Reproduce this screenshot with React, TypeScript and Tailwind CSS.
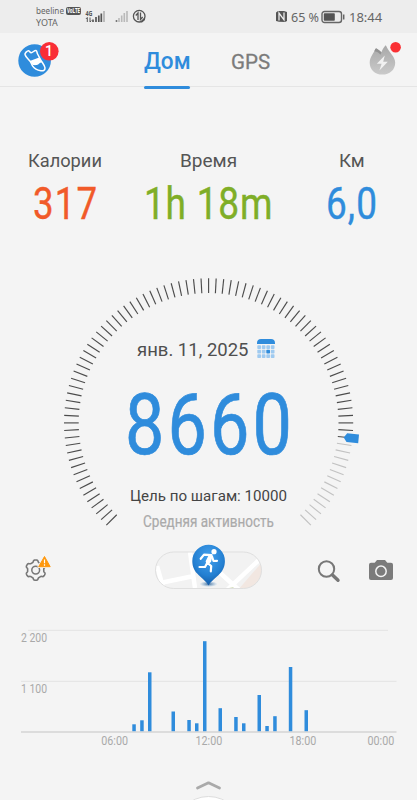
import { useLayoutEffect, useRef, useState, type ReactNode } from "react";

/** Text condensed horizontally so that it fills its container's width. */
function Fit({ className = "", children }: { className?: string; children: ReactNode }) {
  const box = useRef<HTMLDivElement>(null);
  const text = useRef<HTMLSpanElement>(null);
  const [scale, setScale] = useState(1);
  useLayoutEffect(() => {
    if (box.current && text.current) setScale(box.current.offsetWidth / text.current.offsetWidth);
  }, []);
  return (
    <div ref={box} className={`shrink-0 whitespace-nowrap ${className}`}>
      <span ref={text} className="inline-block origin-left" style={{ transform: `scaleX(${scale})` }}>
        {children}
      </span>
    </div>
  );
}

function StatusBar() {
  return (
    <div className="flex h-[33px] shrink-0 items-start bg-[#ededed] font-['Noto_Sans',sans-serif] text-[#666]">
      <div className="ml-[36px] flex flex-col pt-[5px]">
        <div className="flex items-center">
          <Fit className="w-[28px] text-[9px] leading-[12px]">beeline</Fit>
          <div className="ml-[2px] flex h-[8px] w-[15px] justify-center rounded-[2px] bg-[#555]">
            <Fit className="w-[13px] text-[6.5px] leading-[8px] font-bold text-white">VoLTE</Fit>
          </div>
        </div>
        <Fit className="w-[22px] text-[9px] leading-[12px]">YOTA</Fit>
      </div>
      <svg className="ml-[4px]" width="64" height="33" viewBox="85 0 64 33">
        <text x="85.5" y="15.5" fontSize="7.5" fontWeight="700" fill="#555" textLength="7" lengthAdjust="spacingAndGlyphs">4G</text>
        <path d="M87.3 22v-4.5m-1.3 1.4 1.3-1.4M90 17.5V22m1.3-1.4L90 22" stroke="#555" strokeWidth="1" fill="none" />
        <path d="M93 22v-2.5M96 22v-5M98.8 22v-6.5M101.3 22v-8.5" stroke="#555" strokeWidth="1.7" />
        <path d="M104 22V11" stroke="#aaa" strokeWidth="1.5" />
        <path d="M116.5 22v-2" stroke="#777" strokeWidth="1.6" />
        <path d="M119 22v-4M121.7 22v-6.5M124.3 22v-9M127 22V11" stroke="#b9b9b9" strokeWidth="1.6" />
        <circle cx="139.2" cy="16.2" r="5.8" fill="none" stroke="#555" strokeWidth="1.3" />
        <path d="M138 20v-7l-2.2 2.5M140.5 12.5v7l2.2-2.5" stroke="#555" strokeWidth="1.3" fill="none" />
        <path d="m140 22 5-5v3l-3 2.4z" fill="#555" />
      </svg>
      <div className="ml-[126px] flex h-[33px] items-center">
        <svg width="13" height="13" viewBox="0 0 13 13">
          <path d="M3 1h6l3 1v9l-2 1-6-.3L1 11V2.4z" fill="#555" />
          <path d="M4 10.5V3l5 6.800V2.500" fill="none" stroke="#ededed" strokeWidth="1.3" />
        </svg>
        <Fit className="ml-[3px] w-[28px] text-[13px] leading-[18px]">65 %</Fit>
        <svg className="ml-[2px]" width="24" height="14" viewBox="0 0 24 14">
          <rect x="1" y="1.5" width="19.5" height="11" rx="2.5" fill="none" stroke="#666" strokeWidth="1.4" />
          <rect x="2.8" y="3.3" width="11" height="7.4" rx=".8" fill="#555" />
          <path d="M22.7 4.5v5" stroke="#666" strokeWidth="1.5" />
        </svg>
        <Fit className="ml-[4px] w-[33px] text-[13px] leading-[18px]">18:44</Fit>
      </div>
    </div>
  );
}

function Header() {
  return (
    <div className="flex h-[56px] shrink-0">
      <div className="flex h-[54px] w-full border-b border-[#e5e5e5]">
        <svg className="ml-[17px] shrink-0" width="44" height="46" viewBox="17 33 44 46">
          <circle cx="34.6" cy="60.5" r="16.3" fill="#2f8cdc" />
          <path d="M25 54.5c-.4-1.1 2.3-4 3.6-3.8 1.2.3 1.3 2.1 2.6 2 1.8-.1 3-2.5 4.8-2.3 1.2.2.7 2 1.6 3.6 1.1 2.1 2 4 3.5 6.6 1.4 2.4 3.7 4.9 3.9 7.2.2 2.4-1.6 3.3-4.1 2.9-3.1-.5-6.6-2.2-8.2-4.6-1.3-2-1.500-3.700-3.200-5.600-1.700-2-4-3.800-4.500-6z" fill="#2f8cdc" stroke="white" strokeWidth="1.5" strokeLinejoin="round" />
          <path d="m29.7 61 9.500-3.500 2.500 5c-2.200.1-2.700 2-5 2.500-1.400.3-2.700.1-4 0-.6-1.500-1.700-2.700-3-4z" fill="white" />
          <circle cx="49.3" cy="51.3" r="9.3" fill="#f92e36" />
          <text x="49" y="56.3" textAnchor="middle" fontSize="14" fontWeight="500" fill="white">1</text>
        </svg>
        <div className="ml-[82px] flex h-[56px] w-[48px] flex-col justify-between">
          <Fit className="mt-[16px] ml-[0.5px] w-[47px] text-[23px] leading-[25px] font-medium text-[#2f8cdc]">Дом</Fit>
          <div className="ml-[1px] h-[3.5px] w-[46px] rounded-full bg-[#2f8cdc]" />
        </div>
        <Fit className="mt-[16px] ml-[40px] w-[39px] text-[20.5px] leading-[26px] text-[#7b7b7b] [-webkit-text-stroke:0.3px_#7b7b7b]">GPS</Fit>
        <svg className="ml-[97px] shrink-0" width="36" height="46" viewBox="367 33 36 46">
          <defs>
            <linearGradient id="flame" x1="0" x2="0" y1="0" y2="1">
              <stop stopColor="#a8a8a8" />
              <stop offset="1" stopColor="#cacaca" />
            </linearGradient>
          </defs>
          <path d="M375.3 49c-1.600 4.500-5.600 8-5.600 13.700 0 7 5.200 11.900 12.600 11.900s12.900-4.800 12.900-11.900c0-6.200-5.800-9.500-9-16.700-.3-.6-.8-.6-1.200-.1-1.600 2-2.900 4.200-3.600 6.400-1.600-1.300-3-2.500-4.800-3.700-.6-.4-1.100-.2-1.300.4z" fill="url(#flame)" />
          <path d="M375.300 49c.2-.6.700-.8 1.300-.4 1.800 1.200 3.200 2.400 4.800 3.700l-1 2.500c-1-2-3-3.300-6.100-3.600z" fill="#929292" />
          <path d="m384.800 55.400-8 8.400h4.800l-2.200 6.600 8.400-8.600h-4.600z" fill="#f1f1f1" />
          <circle cx="395.6" cy="47.3" r="5.3" fill="#fa3034" />
        </svg>
      </div>
    </div>
  );
}

function Stats() {
  return (
    <div className="mt-[60px] flex h-[80px] shrink-0 text-[#555]">
      <div className="ml-[27px] flex w-[76px] flex-col items-center gap-[6px]">
        <Fit className="w-[74px] text-[18px] leading-[24px]">Калории</Fit>
        <Fit className="w-[65px] text-[44px] leading-[50px] tracking-[0.03em] text-[#f15a29] [-webkit-text-stroke:0.4px_#f15a29]">317</Fit>
      </div>
      <div className="ml-[41px] flex w-[129px] flex-col items-center gap-[6px]">
        <Fit className="w-[57px] text-[18px] leading-[24px]">Время</Fit>
        <Fit className="w-[129px] text-[44px] leading-[50px] tracking-[0.02em] text-[#7fae27] [-webkit-text-stroke:0.4px_#7fae27]">1h 18m</Fit>
      </div>
      <div className="ml-[53px] flex w-[52px] flex-col items-center gap-[6px]">
        <Fit className="w-[26px] text-[18px] leading-[24px]">Км</Fit>
        <Fit className="w-[52px] text-[44px] leading-[50px] tracking-[0.03em] text-[#2f8cdc] [-webkit-text-stroke:0.4px_#2f8cdc]">6,0</Fit>
      </div>
    </div>
  );
}

const ticks = Array.from({ length: 91 }, (_, i) => -135 + i * 3);

function CalendarIcon() {
  const cells = [0, 1, 2, 3].flatMap((c) => [0, 1, 2].map((r) => [c, r]));
  return (
    <svg width="18" height="20" viewBox="0 0 18 20">
      <path d="M0 5V4c0-2.500 1.500-4 4-4h10c2.500 0 4 1.500 4 4v1z" fill="#2f8cdc" />
      {cells.map(([c, r]) => (
        <rect key={`${c}-${r}`} x={0.3 + c * 4.5} y={6.3 + r * 4.5} width="3.7" height="3.7" rx=".7" fill={c === 2 && r === 1 ? "#2f8cdc" : "#9fcaf0"} />
      ))}
    </svg>
  );
}

function Gauge() {
  return (
    <div className="mt-[41px] grid h-[262px] shrink-0 grid-cols-1 grid-rows-1">
      <svg className="col-start-1 row-start-1" width="417" height="262" viewBox="0 270 417 262">
        {ticks.map((a) => (
          <line key={a} x1="208.6" x2="208.6" y1="278.3" y2="293" transform={`rotate(${a} 208.6 422.9)`} stroke={a <= 96 ? "#4c4c4c" : "#c2c2c2"} strokeWidth="1.15" />
        ))}
        <path d="m343.7 437.500 3.500-4.300 11.800 1.200-.8 8.800-11.700-1.300z" fill="#2f8cdc" />
      </svg>
      <div className="col-start-1 row-start-1 flex flex-col items-center pt-[68px]">
        <div className="flex h-[24px] w-full items-center pl-[136.5px]">
          <Fit className="w-[111px] text-[18px] leading-[24px] text-[#4f4f4f]">янв. 11, 2025</Fit>
          <div className="-mt-[3px] ml-[9.5px]">
            <CalendarIcon />
          </div>
        </div>
        <Fit className="mt-[20.5px] ml-[3px] w-[170px] text-[84.5px] leading-[86px] tracking-[0.045em] text-[#2f8cdc] [-webkit-text-stroke:0.7px_#2f8cdc]">8660</Fit>
        <Fit className="mt-[17.5px] w-[157px] text-[15.5px] leading-[20px] text-[#444]">Цель по шагам: 10000</Fit>
        <Fit className="mt-[6px] w-[131px] text-[16px] leading-[20px] text-[#aaa] [-webkit-text-stroke:0.2px_#aaa]">Средняя активность</Fit>
      </div>
    </div>
  );
}

/** Outline of a six-toothed gear with softly rounded teeth. */
const gearPoints = Array.from({ length: 145 }, (_, i) => {
  const t = (i / 144) * Math.PI * 2;
  const r = 9.1 + 1.05 * Math.tanh(2.2 * Math.cos(6 * t));
  return `${(35.7 + r * Math.sin(t)).toFixed(2)},${(570.1 - r * Math.cos(t)).toFixed(2)}`;
}).join(" ");

function Toolbar() {
  return (
    <div className="mt-[8px] flex h-[60px] shrink-0">
      <svg className="mt-[12px] ml-[24px]" width="28" height="34" viewBox="24 552 28 34">
        <polyline points={gearPoints} fill="none" stroke="#777" strokeWidth="1.6" strokeLinejoin="round" />
        <circle cx="35.7" cy="570.1" r="3.9" fill="none" stroke="#777" strokeWidth="1.5" />
        <path d="m44.5 556.5 5.700 10.200H38.700z" fill="#ff980d" stroke="#f4f4f4" strokeWidth="2.4" strokeLinejoin="round" />
        <path d="m44.5 556.5 5.700 10.200H38.700z" fill="#ff980d" stroke="#ff980d" strokeWidth="1" strokeLinejoin="round" />
        <path d="M44.5 559.5v3.700m0 1.100v1.400" stroke="white" strokeWidth="1.2" />
      </svg>
      <svg className="ml-[102px]" width="110" height="52" viewBox="154 540 110 52">
        <defs>
          <clipPath id="pill"><rect x="155.5" y="552" width="106" height="36.5" rx="18.2" /></clipPath>
          <radialGradient id="pin" cx=".5" cy=".3" r=".7">
            <stop stopColor="#43a0ed" />
            <stop offset=".65" stopColor="#2480d2" />
            <stop offset="1" stopColor="#155ca7" />
          </radialGradient>
          <radialGradient id="shade">
            <stop stopColor="#174b80" stopOpacity=".8" />
            <stop offset="1" stopColor="#4e91cb" stopOpacity="0" />
          </radialGradient>
        </defs>
        <g clipPath="url(#pill)">
          <path d="M154 551h110v39H154z" fill="#f2f2f2" />
          <path d="M238 590l25-29v29z" fill="#f2e7e1" />
          <path d="m157 566 6 21M160 583l34-7M190 552l5 36M218 571l21 19M226 591l34-32" fill="none" stroke="white" strokeWidth="4.5" />
          <path d="m229 588 4-1 3 3h-8z" fill="#d6dfbd" />
        </g>
        <rect x="155.5" y="552" width="106" height="36.5" rx="18.2" fill="none" stroke="#dfdfdf" />
        <ellipse cx="208.5" cy="584" rx="9" ry="3" fill="url(#shade)" />
        <path d="M208.500 585.500c-2-3.800-7-7.300-11.300-11.900-2.800-3-4.900-6.800-4.900-12.600a16.300 16.300 0 0 1 32.600 0c0 5.800-2.100 9.600-4.900 12.600-4.300 4.600-9.400 8.100-11.500 11.900z" fill="url(#pin)" />
        <circle cx="214" cy="551.7" r="2.6" fill="white" />
        <path d="m211.500 555-7.500-.4-3.300 4.200M210.500 556l-3.500 6.500 4.200 3.500-.4 5.300M207.700 562l-2.700 5h-5.500M212 556.500l1.500 4.500 3.500-.2" fill="none" stroke="white" strokeWidth="2.2" strokeLinecap="round" strokeLinejoin="round" />
        <path d="m208.500 555.500 4 .5-1.500 6-2.500 2-3-2.500z" fill="white" />
      </svg>
      <svg className="mt-[17px] ml-[52px]" width="26" height="28" viewBox="316 557 26 28">
        <circle cx="326.5" cy="569" r="7.7" fill="none" stroke="#777" strokeWidth="2" />
        <path d="m332.500 575 5.500 5.300" stroke="#777" strokeWidth="3.4" strokeLinecap="round" />
      </svg>
      <svg className="mt-[18px] ml-[26px]" width="26" height="24" viewBox="368 558 26 24">
        <path d="M371 562.800h3.700l2.300-2.800h8l2.300 2.800h3.700q2 0 2 2v13.200q0 2-2 2h-20q-2 0-2-2v-13.200q0-2 2-2z" fill="#7b7b7b" />
        <circle cx="381" cy="571.3" r="5.2" fill="#7b7b7b" stroke="#f4f4f4" strokeWidth="1.5" />
      </svg>
    </div>
  );
}

const bars = [
  [132.3, 724.3], [140.2, 720.3], [148, 672.3], [171.5, 711.5], [187.3, 720], [195, 723.3],
  [203, 641.2], [218.5, 708.2], [234.2, 717], [242, 723.3], [257.5, 695], [265.3, 726], [273.2, 716.2],
  [288.8, 667], [304.5, 710.2],
];
const labels: [string, number, number, number][] = [
  ["2 200", 21, 642.3, 26], ["1 100", 21, 693.3, 26],
  ["06:00", 101.3, 745.2, 26.7], ["12:00", 195.5, 745.2, 26.7],
  ["18:00", 289.5, 745.2, 26.7], ["00:00", 367.5, 745.2, 26.7],
];

function Chart() {
  return (
    <svg className="mt-[20px] shrink-0" width="417" height="135" viewBox="0 620 417 135">
      <path d="M28 630.300h360M21 681.300h375.500" stroke="#e6e6e6" strokeWidth="1.2" />
      <path d="M21 732h375.500" stroke="#dcdcdc" strokeWidth="1.8" />
      {bars.map(([x, y]) => (
        <rect key={x} x={x} y={y} width="3.5" height={731.2 - y} fill="#2f8cdc" />
      ))}
      {labels.map(([t, x, y, w]) => (
        <text key={t} x={x} y={y} textLength={w} lengthAdjust="spacingAndGlyphs" fontSize="12.8" fill="#a9a9a9">{t}</text>
      ))}
    </svg>
  );
}

export default function App() {
  return (
    <div className="flex h-[800px] w-[417px] flex-col overflow-hidden bg-[#f4f4f4] font-[Roboto,sans-serif]">
      <StatusBar />
      <Header />
      <Stats />
      <Gauge />
      <Toolbar />
      <Chart />
      <svg className="mt-[20px] shrink-0" width="417" height="25" viewBox="0 775 417 25">
        <path d="m197.500 788 11-5.200 11 5.200" fill="none" stroke="#aaa" strokeWidth="2.8" strokeLinecap="round" strokeLinejoin="round" />
        <circle cx="208.5" cy="830.5" r="34" fill="white" stroke="#ddd" />
      </svg>
    </div>
  );
}
